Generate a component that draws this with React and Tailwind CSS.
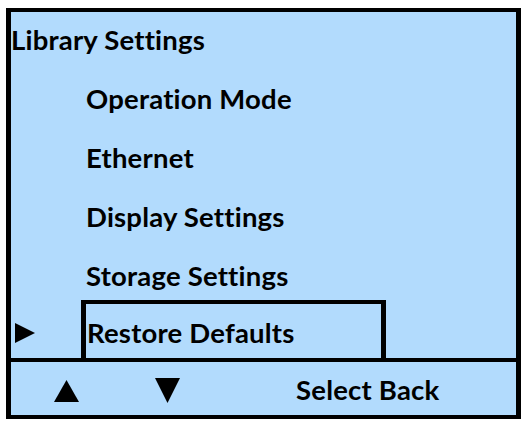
const items = ["Operation Mode", "Ethernet", "Display Settings"];

const App = () => {
  return (
    <div
      className="h-[423px] w-[526px] bg-white pl-[6px] pt-[8px]"
      style={{ fontFamily: "Lato, 'Open Sans', sans-serif" }}
    >
      <div className="flex h-[411px] w-[515px] flex-col border-x-[5px] border-y-[4px] border-black bg-[#b2dbfd] text-[27.5px] font-bold tracking-[0.2px] text-black">
        {/* menu */}
        <div className="flex flex-col">
          <div className="h-[59px] pt-[12px] leading-[32px]">Library Settings</div>

          {items.map((item) => (
            <div key={item} className="h-[59px] pl-[75px] pt-[12px] leading-[32px]">
              {item}
            </div>
          ))}

          <div className="h-[52px] pl-[75px] pt-[12px] leading-[32px]">Storage Settings</div>

          <div className="flex h-[58px] items-start">
            <svg width="20" height="20" viewBox="0 0 20 20" className="ml-[4px] mt-[23px]">
              <polygon points="0,0 20,10 0,20" fill="black" />
            </svg>
            <div className="ml-[46px] h-[58px] w-[305px] border-x-[5px] border-t-[4px] border-black pl-[1px] pt-[13px] leading-[32px]">
              Restore Defaults
            </div>
          </div>
        </div>

        {/* soft keys */}
        <div className="flex h-[57px] items-start border-t-[4px] border-black">
          <svg width="25" height="22" viewBox="0 0 25 22" className="ml-[43px] mt-[18px]">
            <polygon points="12.5,0 25,22 0,22" fill="black" />
          </svg>
          <svg width="25" height="25" viewBox="0 0 25 25" className="ml-[76px] mt-[16px]">
            <polygon points="0,0 25,0 12.5,25" fill="black" />
          </svg>
          <div className="ml-[116px] pt-[12px] leading-[32px]">Select Back</div>
        </div>
      </div>
    </div>
  );
};

export default App;
